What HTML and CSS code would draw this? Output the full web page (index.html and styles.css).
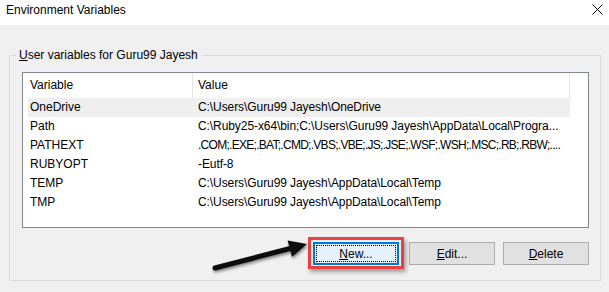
FILE: index.html
```html
<!DOCTYPE html>
<html>
<head>
<meta charset="utf-8">
<link rel="stylesheet" href="styles.css">
</head>
<body>
<div class="window">
  <div class="titlebar">
    <span class="title">Environment Variables</span>
    <svg class="close" width="11" height="11" viewBox="0 0 11 11"><path d="M0.5 0.5 L10.5 10.5 M10.5 0.5 L0.5 10.5" stroke="#000" stroke-width="1" fill="none"/></svg>
  </div>
  <div class="content">
    <fieldset class="group">
      <legend class="legend"><u>U</u>ser variables for Guru99 Jayesh</legend>
      <div class="listbox">
        <div class="header">
          <div class="hcell hcol1">Variable</div>
          <div class="hcell hcol2">Value</div>
        </div>
        <div class="row selected"><div class="cell col1">OneDrive</div><div class="cell col2">C:\Users\Guru99 Jayesh\OneDrive</div></div>
        <div class="row"><div class="cell col1">Path</div><div class="cell col2">C:\Ruby25-x64\bin;C:\Users\Guru99 Jayesh\AppData\Local\Progra...</div></div>
        <div class="row"><div class="cell col1">PATHEXT</div><div class="cell col2 dense">.COM;.EXE;.BAT;.CMD;.VBS;.VBE;.JS;.JSE;.WSF;.WSH;.MSC;.RB;.RBW;....</div></div>
        <div class="row"><div class="cell col1">RUBYOPT</div><div class="cell col2">-Eutf-8</div></div>
        <div class="row"><div class="cell col1">TEMP</div><div class="cell col2">C:\Users\Guru99 Jayesh\AppData\Local\Temp</div></div>
        <div class="row"><div class="cell col1">TMP</div><div class="cell col2">C:\Users\Guru99 Jayesh\AppData\Local\Temp</div></div>
      </div>
      <div class="buttons">
        <div class="highlight">
          <button class="btn btn-focus"><span class="focusrect"><u>N</u>ew...</span></button>
        </div>
        <button class="btn"><u>E</u>dit...</button>
        <button class="btn"><u>D</u>elete</button>
      </div>
    </fieldset>
  </div>
  <svg class="arrow" width="609" height="292" viewBox="0 0 609 292">
    <defs>
      <filter id="sh" x="-20%" y="-50%" width="140%" height="200%">
        <feGaussianBlur in="SourceAlpha" stdDeviation="1.5"/>
        <feOffset dx="1" dy="2" result="b"/>
        <feComponentTransfer><feFuncA type="linear" slope="0.45"/></feComponentTransfer>
        <feMerge><feMergeNode/><feMergeNode in="SourceGraphic"/></feMerge>
      </filter>
    </defs>
    <g filter="url(#sh)">
      <line x1="215" y1="268" x2="292" y2="248" stroke="#111" stroke-width="5" stroke-linecap="round"/>
      <polygon points="307,244 287.6,240.4 292,257" fill="#111"/>
    </g>
  </svg>
</div>
</body>
</html>
```

FILE: styles.css
```css
html, body {
  margin: 0;
  padding: 0;
}
body {
  width: 609px;
  height: 292px;
  overflow: hidden;
  background: #f0f0f0;
  font-family: "Segoe UI", "Liberation Sans", Arial, sans-serif;
  font-size: 12px;
  color: #000;
}
.window {
  position: relative;
  width: 609px;
  height: 292px;
}
.titlebar {
  height: 25px;
  background: #fff;
  display: flex;
  justify-content: space-between;
  align-items: flex-start;
}
.title {
  margin-left: 6px;
  margin-top: 2px;
  line-height: 16px;
}
.close {
  margin-top: 4px;
  margin-right: 6px;
  display: block;
}
.content {
  padding: 22px 8px 0 9px;
}
.group {
  margin: 0;
  border: 1px solid #dcdcdc;
  padding: 9px 11px 15px 12px;
  height: 234px;
  box-sizing: border-box;
  min-width: 0;
}
.legend {
  padding: 0 3px;
  margin-left: -6px;
  line-height: 16px;
}
.listbox {
  background: #fff;
  border: 1px solid #828790;
  height: 156px;
  box-sizing: border-box;
}
.header {
  display: flex;
  height: 25px;
}
.hcell {
  line-height: 25px;
  border-right: 1px solid #e5e5e5;
  box-sizing: border-box;
  white-space: nowrap;
}
.hcol1 {
  width: 170px;
  padding-left: 7px;
}
.hcol2 {
  width: 377px;
  padding-left: 5px;
}
.row {
  display: flex;
  height: 19px;
  margin-left: 5px;
  width: 542px;
}
.row.selected {
  background: #efefef;
}
.cell {
  line-height: 19px;
  white-space: nowrap;
  overflow: hidden;
}
.col1 {
  width: 165px;
  padding-left: 2px;
  box-sizing: border-box;
}
.col2 {
  flex: 1;
  padding-left: 5px;
  letter-spacing: -0.08px;
}
.col2.dense {
  letter-spacing: -0.72px;
}
.buttons {
  display: flex;
  justify-content: flex-end;
  margin-top: 14px;
  gap: 8px;
}
.highlight {
  position: relative;
  margin-right: 2px;
  display: flex;
}
.highlight::before {
  content: "";
  position: absolute;
  left: -5px;
  right: -5px;
  top: -5px;
  bottom: -4px;
  border: 3px solid #e8413f;
  box-shadow: 2px 3px 4px rgba(0, 0, 0, 0.35);
  pointer-events: none;
}
.btn {
  width: 86px;
  height: 23px;
  margin: 0;
  padding: 0;
  font: inherit;
  color: #000;
  background: #e1e1e1;
  border: 1px solid #adadad;
  box-sizing: border-box;
  display: flex;
  align-items: center;
  justify-content: center;
}
.btn-focus {
  position: relative;
  background: #e5f1fb;
  border: 2px solid #0078d7;
  padding: 1px;
}
.focusrect {
  width: 100%;
  height: 100%;
  border: 1px dotted #000;
  box-sizing: border-box;
  display: flex;
  align-items: center;
  justify-content: center;
}
.arrow {
  position: absolute;
  left: 0;
  top: 0;
  pointer-events: none;
}
```
